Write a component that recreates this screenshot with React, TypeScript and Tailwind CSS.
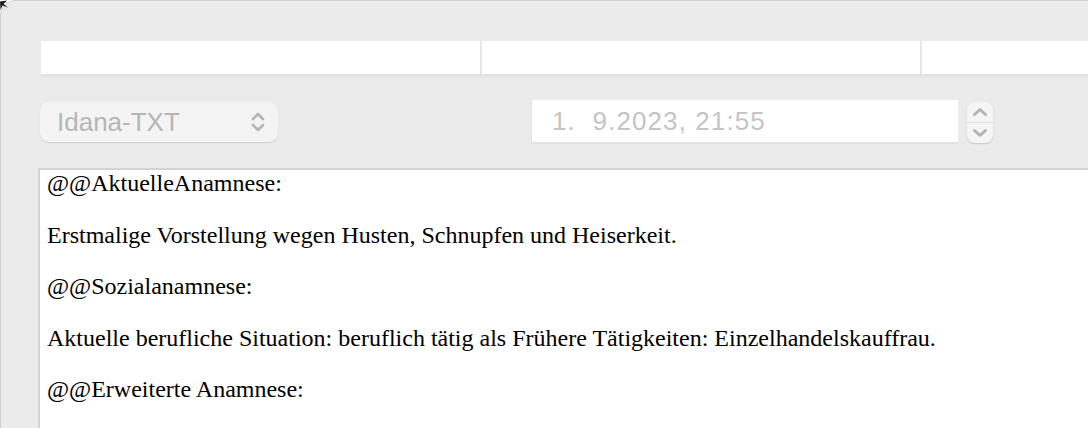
import React from "react";

const paragraphs = [
  "@@AktuelleAnamnese:",
  "Erstmalige Vorstellung wegen Husten, Schnupfen und Heiserkeit.",
  "@@Sozialanamnese:",
  "Aktuelle berufliche Situation: beruflich tätig als Frühere Tätigkeiten: Einzelhandelskauffrau.",
  "@@Erweiterte Anamnese:",
];

function Chevrons({ className }: { className?: string }) {
  return (
    <svg className={className} width="16" height="22" viewBox="0 0 16 22" fill="none">
      <path d="M3 8 L8 3 L13 8" stroke="#b4b4b4" strokeWidth="2.6" strokeLinecap="round" strokeLinejoin="round" />
      <path d="M3 14 L8 19 L13 14" stroke="#b4b4b4" strokeWidth="2.6" strokeLinecap="round" strokeLinejoin="round" />
    </svg>
  );
}

export default function App() {
  return (
    <div className="relative w-[1088px] h-[428px] overflow-hidden bg-white">
      {/* Mauszeiger oben links */}
      <svg className="absolute left-0 top-0 z-10" width="9" height="11" viewBox="0 0 9 11">
        <path d="M0 1.5 L7 0.5 L3.5 4 L8 7.5 L2.5 5.5 L0.5 10 Z" fill="#1a1a1a" />
      </svg>

      <div
        className="h-full w-full rounded-tl-[16px] bg-[#ebebeb] border-l border-t border-[#cfcfcf] flex flex-col"
        style={{ fontFamily: '"Liberation Sans", Arial, sans-serif' }}
      >
        {/* Felderzeile */}
        <div className="mt-[40px] ml-[40px] flex h-[36px] border-b-[3px] border-[#e3e3e3]">
          <div className="w-[439px] bg-white" />
          <div className="w-[2px] bg-[#e6e6e6]" />
          <div className="w-[438px] bg-white" />
          <div className="w-[2px] bg-[#e6e6e6]" />
          <div className="flex-1 bg-white" />
        </div>

        {/* Auswahl + Datum */}
        <div className="mt-[23px] ml-[39px] flex items-center h-[44px]">
          <div className="w-[238px] h-[40px] rounded-[9px] bg-[#f4f4f4] shadow-[0_1px_1px_rgba(0,0,0,0.12)] flex items-center pl-[17px] pr-[12px]">
            <span className="text-[26px] text-[#b6b6b6] leading-none">Idana-TXT</span>
            <Chevrons className="ml-auto" />
          </div>
          <div className="ml-[253px] w-[427px] h-[44px] bg-white border-b-[2px] border-l border-[#e2e2e2] flex items-center pl-[20px]">
            <span className="text-[26px] tracking-[1.1px] text-[#c4c4c4] leading-none whitespace-pre">1.  9.2023, 21:55</span>
          </div>
          <div className="ml-[9px] w-[26px] h-[41px] rounded-[8px] bg-[#f5f5f5] shadow-[0_1px_1.5px_rgba(0,0,0,0.16)] flex flex-col">
            <div className="flex-1 flex items-center justify-center border-b border-[#e0e0e0]">
              <svg width="16" height="10" viewBox="0 0 16 10" fill="none">
                <path d="M2.5 7.5 L8 2.5 L13.5 7.5" stroke="#b2b2b2" strokeWidth="2.8" strokeLinecap="round" strokeLinejoin="round" />
              </svg>
            </div>
            <div className="flex-1 flex items-center justify-center">
              <svg width="16" height="10" viewBox="0 0 16 10" fill="none">
                <path d="M2.5 2.5 L8 7.5 L13.5 2.5" stroke="#b2b2b2" strokeWidth="2.8" strokeLinecap="round" strokeLinejoin="round" />
              </svg>
            </div>
          </div>
        </div>

        {/* Textbereich */}
        <div className="mt-[24px] ml-[37px] flex-1 bg-white border-t-[2px] border-l-[2px] border-[#d3d3d3] pl-[7px]">
          <div style={{ fontFamily: '"Liberation Serif", "Times New Roman", serif' }} className="text-[24px] text-black">
            {paragraphs.map((p) => (
              <p key={p} className="leading-[27px] mb-[24.5px] whitespace-nowrap">
                {p}
              </p>
            ))}
          </div>
        </div>
      </div>
    </div>
  );
}
